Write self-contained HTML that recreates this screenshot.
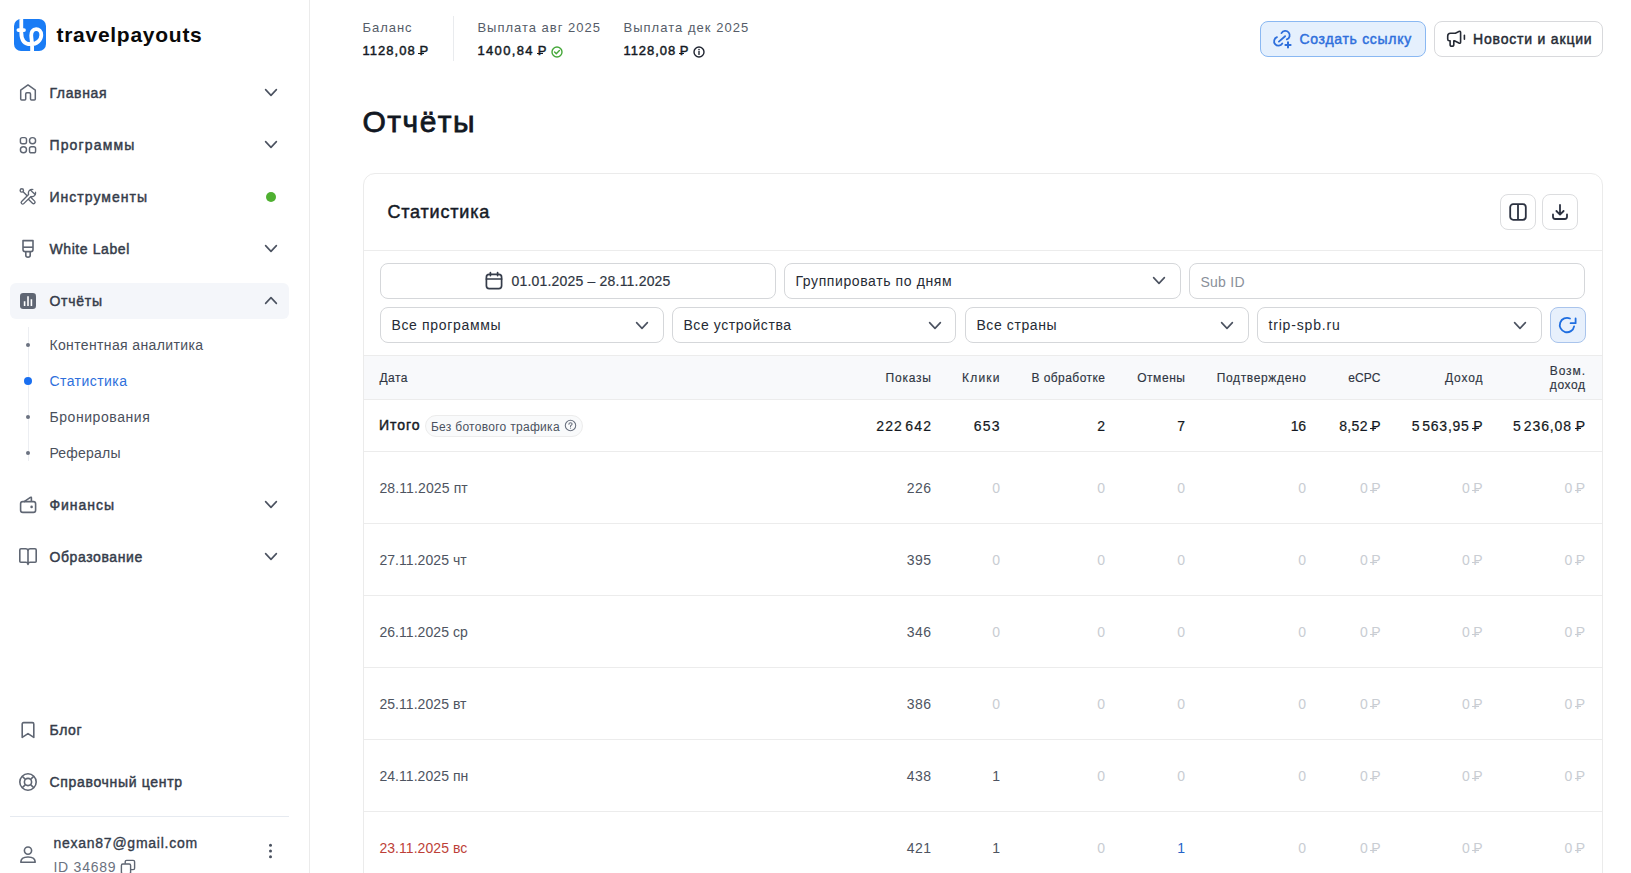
<!DOCTYPE html>
<html lang="ru">
<head>
<meta charset="utf-8">
<style>
*{box-sizing:border-box;margin:0;padding:0}
html,body{width:1631px;height:873px;overflow:hidden;background:#fff}
body{font-family:"Liberation Sans",sans-serif;color:#1f2430;position:relative}
.abs{position:absolute;white-space:nowrap}
svg{display:block}
.r{position:relative;display:inline-block}
.r::after{content:"";position:absolute;left:-0.07em;width:0.45em;top:0.665em;height:0.085em;background:currentColor}
.b .r::after{height:0.12em;left:-0.08em}
.m{-webkit-text-stroke:0.2px currentColor}
.mm{-webkit-text-stroke:0.35px currentColor}
.mh{-webkit-text-stroke:0.15px currentColor}
.sb{-webkit-text-stroke:0.45px currentColor}
</style>
</head>
<body>
<div class="abs" style="left:309px;top:0;width:1px;height:873px;background:#ebebeb"></div>
<svg class="abs" style="left:14px;top:19px" width="32" height="32" viewBox="0 0 32 32">
<defs><clipPath id="lc"><rect width="32" height="32" rx="7"/></clipPath></defs>
<rect width="32" height="32" rx="7" fill="#1a7cf5"/>
<g clip-path="url(#lc)" fill="none" stroke="#fff" stroke-width="3.8">
<path d="M4.4 11.1 H10" stroke-linecap="round"/>
<path d="M7.3 -2 V13.5 C7.3 21.5 11 25.2 16.5 25.2 C23 25.2 27.3 21 27.3 16 C27.3 12 24.8 10.2 22.2 10.2 C18.8 10.2 16.9 13 17.3 17.5 C17.6 21 18.1 24 18.1 28 V34"/>
</g></svg>
<div class="abs" style="left:56.45px;top:23.50px;font-size:21px;line-height:21px;font-weight:bold;color:#0a0a0a;letter-spacing:0.733px;">travelpayouts</div>
<div class="abs" style="left:10px;top:283px;width:279px;height:36px;border-radius:6px;background:#f4f6fa"></div>
<div class="abs b sb" style="left:49.45px;top:86.00px;font-size:14px;line-height:14px;font-weight:normal;color:#353c4a;letter-spacing:0.638px;">Главная</div>
<svg class="abs" style="left:264px;top:88px" width="14" height="9" viewBox="-1 -1 14 9"><path d="M0.6 0.6 L6.0 6.4 L11.4 0.6" fill="none" stroke="#4b5260" stroke-width="1.6" stroke-linecap="round" stroke-linejoin="round"/></svg>
<div class="abs b sb" style="left:49.45px;top:138.00px;font-size:14px;line-height:14px;font-weight:normal;color:#353c4a;letter-spacing:1.15px;">Программы</div>
<svg class="abs" style="left:264px;top:140px" width="14" height="9" viewBox="-1 -1 14 9"><path d="M0.6 0.6 L6.0 6.4 L11.4 0.6" fill="none" stroke="#4b5260" stroke-width="1.6" stroke-linecap="round" stroke-linejoin="round"/></svg>
<div class="abs b sb" style="left:49.45px;top:190.00px;font-size:14px;line-height:14px;font-weight:normal;color:#353c4a;letter-spacing:1.04px;">Инструменты</div>
<div class="abs b sb" style="left:49.45px;top:242.00px;font-size:14px;line-height:14px;font-weight:normal;color:#353c4a;letter-spacing:0.6px;">White Label</div>
<svg class="abs" style="left:264px;top:244px" width="14" height="9" viewBox="-1 -1 14 9"><path d="M0.6 0.6 L6.0 6.4 L11.4 0.6" fill="none" stroke="#4b5260" stroke-width="1.6" stroke-linecap="round" stroke-linejoin="round"/></svg>
<div class="abs b sb" style="left:49.45px;top:294.00px;font-size:14px;line-height:14px;font-weight:normal;color:#353c4a;letter-spacing:0.76px;">Отчёты</div>
<svg class="abs" style="left:264px;top:296px" width="14" height="9" viewBox="-1 -1 14 9"><path d="M0.6 6.4 L6.0 0.6 L11.4 6.4" fill="none" stroke="#4b5260" stroke-width="1.6" stroke-linecap="round" stroke-linejoin="round"/></svg>
<div class="abs b sb" style="left:49.45px;top:498.00px;font-size:14px;line-height:14px;font-weight:normal;color:#353c4a;letter-spacing:0.971px;">Финансы</div>
<svg class="abs" style="left:264px;top:500px" width="14" height="9" viewBox="-1 -1 14 9"><path d="M0.6 0.6 L6.0 6.4 L11.4 0.6" fill="none" stroke="#4b5260" stroke-width="1.6" stroke-linecap="round" stroke-linejoin="round"/></svg>
<div class="abs b sb" style="left:49.45px;top:550.00px;font-size:14px;line-height:14px;font-weight:normal;color:#353c4a;letter-spacing:0.6px;">Образование</div>
<svg class="abs" style="left:264px;top:552px" width="14" height="9" viewBox="-1 -1 14 9"><path d="M0.6 0.6 L6.0 6.4 L11.4 0.6" fill="none" stroke="#4b5260" stroke-width="1.6" stroke-linecap="round" stroke-linejoin="round"/></svg>
<div class="abs b sb" style="left:49.45px;top:723.00px;font-size:14px;line-height:14px;font-weight:normal;color:#353c4a;letter-spacing:0.664px;">Блог</div>
<div class="abs b sb" style="left:49.45px;top:775.00px;font-size:14px;line-height:14px;font-weight:normal;color:#353c4a;letter-spacing:0.681px;">Справочный центр</div>
<div class="abs" style="left:266px;top:192px;width:10px;height:10px;border-radius:5px;background:#4fb031"></div>
<svg class="abs" style="left:19px;top:83px" width="19" height="19" viewBox="0 0 19 19"><path d="M1.7 7.2 L9 1.9 L16.3 7.2 V16 Q16.3 17 15.3 17 H12.5 Q11.5 17 11.5 16 V11 Q11.5 9.8 10.3 9.8 H7.9 Q6.7 9.8 6.7 11 V16 Q6.7 17 5.7 17 H2.7 Q1.7 17 1.7 16 Z" fill="none" stroke="#5f6673" stroke-width="1.5" stroke-linejoin="round"/></svg>
<svg class="abs" style="left:19px;top:136px" width="19" height="19" viewBox="0 0 19 19"><g fill="none" stroke="#5f6673" stroke-width="1.45"><rect x="1.4" y="1.6" width="6.1" height="6.1" rx="1.9"/><circle cx="13.55" cy="4.65" r="3.05"/><circle cx="4.45" cy="13.75" r="3.05"/><rect x="10.5" y="10.7" width="6.1" height="6.1" rx="1.9"/></g></svg>
<svg class="abs" style="left:17px;top:186px" width="21" height="21" viewBox="-0.9 -0.5 24 24"><g stroke-linecap="round" fill="none"><path d="M5.2 5.2 L11.5 11.5" stroke="#5f6673" stroke-width="1.6"/><circle cx="4.6" cy="4.6" r="1.9" stroke="#5f6673" stroke-width="1.6" fill="#fff"/><path d="M13.6 13.6 L18 18" stroke="#5f6673" stroke-width="5"/><path d="M13.6 13.6 L18 18" stroke="#fff" stroke-width="1.9"/><path d="M15.5 8.5 L5.6 18.4" stroke="#5f6673" stroke-width="5"/><circle cx="16.2" cy="7.6" r="4.9" fill="#5f6673"/><path d="M15.5 8.5 L5.6 18.4" stroke="#fff" stroke-width="1.9"/><circle cx="16.2" cy="7.6" r="3.3" fill="#fff"/><path d="M17 6.8 L21 2.8" stroke="#fff" stroke-width="3.4" stroke-linecap="butt"/><path d="M14.6 4.2 L16.8 6.5 M19.6 9 L17.4 6.8" stroke="#5f6673" stroke-width="1.6"/></g></svg>
<svg class="abs" style="left:21px;top:239px" width="14" height="20" viewBox="0 0 14 20"><path d="M2 1.6 H12 V10.4 Q12 12.6 9.8 12.6 H4.2 Q2 12.6 2 10.4 Z" fill="none" stroke="#5f6673" stroke-width="1.6" stroke-linejoin="round"/><path d="M2 8.2 H12" stroke="#5f6673" stroke-width="1.6"/><path d="M4.8 12.6 V16.6 Q4.8 18.2 7 18.2 Q9.2 18.2 9.2 16.6 V12.6" fill="none" stroke="#5f6673" stroke-width="1.6"/></svg>
<svg class="abs" style="left:20px;top:293px" width="16" height="16" viewBox="0 0 16 16"><rect x="0" y="0" width="16" height="16" rx="3.2" fill="#5f6673"/><path d="M4.6 8.2 V13.1 M8 3.2 V13.1 M11.4 6.2 V13.1" stroke="#fff" stroke-width="1.6"/></svg>
<div class="abs" style="left:28px;top:327px;width:1px;height:134px;background:#eceef2"></div>
<div class="abs" style="left:26px;top:343px;width:4px;height:4px;border-radius:2px;background:#6b7280"></div>
<div class="abs" style="left:26px;top:415px;width:4px;height:4px;border-radius:2px;background:#6b7280"></div>
<div class="abs" style="left:26px;top:451px;width:4px;height:4px;border-radius:2px;background:#6b7280"></div>
<div class="abs" style="left:24px;top:377px;width:8px;height:8px;border-radius:4px;background:#1a6ff0"></div>
<div class="abs" style="left:49.45px;top:338.00px;font-size:14px;line-height:14px;font-weight:normal;color:#4a505c;letter-spacing:0.366px;">Контентная аналитика</div>
<div class="abs" style="left:49.45px;top:374.00px;font-size:14px;line-height:14px;font-weight:normal;color:#2e6fdc;letter-spacing:0.446px;">Статистика</div>
<div class="abs" style="left:49.45px;top:410.00px;font-size:14px;line-height:14px;font-weight:normal;color:#4a505c;letter-spacing:0.573px;">Бронирования</div>
<div class="abs" style="left:49.45px;top:446.00px;font-size:14px;line-height:14px;font-weight:normal;color:#4a505c;letter-spacing:0.208px;">Рефералы</div>
<svg class="abs" style="left:19px;top:495px" width="18" height="19" viewBox="0 0 18 19"><path d="M4.8 6.8 L11.4 2.4 Q12.4 1.8 12.4 3 V6.8" fill="none" stroke="#5f6673" stroke-width="1.6" stroke-linejoin="round"/><rect x="1.6" y="6.6" width="15" height="10.8" rx="2.2" fill="none" stroke="#5f6673" stroke-width="1.6"/><circle cx="12.6" cy="11.9" r="1.3" fill="#5f6673"/></svg>
<svg class="abs" style="left:18px;top:547px" width="20" height="19" viewBox="0 0 20 19"><path d="M10 4 Q10 1.8 7.6 1.8 H3 Q1.8 1.8 1.8 3 V14.2 Q1.8 15.2 2.8 15.2 H7.6 Q10 15.2 10 17.4 Q10 15.2 12.4 15.2 H17.2 Q18.2 15.2 18.2 14.2 V3 Q18.2 1.8 17 1.8 H12.4 Q10 1.8 10 4 Z M10 4 V17" fill="none" stroke="#5f6673" stroke-width="1.6" stroke-linejoin="round"/></svg>
<svg class="abs" style="left:20px;top:721px" width="16" height="18" viewBox="0 0 16 18"><path d="M2.2 16.4 V3 Q2.2 1.6 3.6 1.6 H12.4 Q13.8 1.6 13.8 3 V16.4 L8 12.6 Z" fill="none" stroke="#5f6673" stroke-width="1.6" stroke-linejoin="round"/></svg>
<svg class="abs" style="left:18px;top:772px" width="20" height="20" viewBox="0 0 20 20"><circle cx="10" cy="10" r="8.2" fill="none" stroke="#5f6673" stroke-width="1.6"/><circle cx="10" cy="10" r="3.6" fill="none" stroke="#5f6673" stroke-width="1.6"/><path d="M4.2 4.2 L7.4 7.4 M15.8 4.2 L12.6 7.4 M4.2 15.8 L7.4 12.6 M15.8 15.8 L12.6 12.6" stroke="#5f6673" stroke-width="1.6"/></svg>
<div class="abs" style="left:10px;top:816px;width:279px;height:1px;background:#e6eaf0"></div>
<svg class="abs" style="left:19px;top:845px" width="18" height="19" viewBox="0 0 18 19"><circle cx="9" cy="5.6" r="3.6" fill="none" stroke="#5f6673" stroke-width="1.6"/><path d="M1.8 17.2 Q1.8 12 9 12 Q16.2 12 16.2 17.2 Z" fill="none" stroke="#5f6673" stroke-width="1.6" stroke-linejoin="round"/></svg>
<div class="abs mm" style="left:53.45px;top:836.00px;font-size:14px;line-height:14px;font-weight:normal;color:#353c4a;letter-spacing:0.75px;">nexan87@gmail.com</div>
<div class="abs" style="left:53.45px;top:859.50px;font-size:14px;line-height:14px;font-weight:normal;color:#6b7280;letter-spacing:0.763px;">ID 34689</div>
<svg class="abs" style="left:120px;top:859px" width="16" height="16" viewBox="0 0 16 16"><path d="M5.2 4.8 V2.8 Q5.2 1.4 6.6 1.4 H13.2 Q14.6 1.4 14.6 2.8 V9.2 Q14.6 10.6 13.2 10.6 H10.8" fill="none" stroke="#5f6673" stroke-width="1.4"/><rect x="1.4" y="5" width="9.2" height="9.6" rx="1.4" fill="none" stroke="#5f6673" stroke-width="1.4"/></svg>
<svg class="abs" style="left:268px;top:843px" width="5" height="16" viewBox="0 0 5 16"><circle cx="2.5" cy="2.2" r="1.5" fill="#4b5260"/><circle cx="2.5" cy="8" r="1.5" fill="#4b5260"/><circle cx="2.5" cy="13.8" r="1.5" fill="#4b5260"/></svg>
<div class="abs" style="left:362.45px;top:21.00px;font-size:13px;line-height:13px;font-weight:normal;color:#555c68;letter-spacing:0.98px;">Баланс</div>
<div class="abs b sb" style="left:362.45px;top:44.10px;font-size:13px;line-height:13px;font-weight:normal;color:#141a24;letter-spacing:1.042px;">1128,08&#8201;<span class="r">Р</span></div>
<div class="abs" style="left:453px;top:16px;width:1px;height:45px;background:#e9ebee"></div>
<div class="abs" style="left:477.45px;top:21.00px;font-size:13px;line-height:13px;font-weight:normal;color:#555c68;letter-spacing:0.986px;">Выплата авг 2025</div>
<div class="abs b sb" style="left:477.45px;top:44.10px;font-size:13px;line-height:13px;font-weight:normal;color:#141a24;letter-spacing:1.35px;">1400,84&#8201;<span class="r">Р</span></div>
<svg class="abs" style="left:551px;top:46px" width="12" height="12" viewBox="0 0 12 12"><circle cx="6" cy="6" r="5" fill="none" stroke="#46a83a" stroke-width="1.4"/><path d="M3.6 6.1 L5.3 7.7 L8.4 4.5" fill="none" stroke="#46a83a" stroke-width="1.4" stroke-linecap="round" stroke-linejoin="round"/></svg>
<div class="abs" style="left:623.45px;top:21.00px;font-size:13px;line-height:13px;font-weight:normal;color:#555c68;letter-spacing:1.038px;">Выплата дек 2025</div>
<div class="abs b sb" style="left:623.45px;top:44.10px;font-size:13px;line-height:13px;font-weight:normal;color:#141a24;letter-spacing:0.95px;">1128,08&#8201;<span class="r">Р</span></div>
<svg class="abs" style="left:693px;top:46px" width="12" height="12" viewBox="0 0 12 12"><circle cx="6" cy="6" r="5" fill="none" stroke="#1f2430" stroke-width="1.4"/><path d="M6 5.4 V8.4" stroke="#1f2430" stroke-width="1.4" stroke-linecap="round"/><circle cx="6" cy="3.6" r="0.8" fill="#1f2430"/></svg>
<div class="abs" style="left:1260px;top:21px;width:166px;height:36px;border:1px solid #8ab8f2;border-radius:8px;background:#e5f0fd;"></div>
<svg class="abs" style="left:1270px;top:27px" width="24" height="24" viewBox="0 0 24 24"><g fill="none" stroke="#2e6fdc" stroke-width="1.8" stroke-linecap="round"><path d="M11.49 6.1 A4.4 4.4 0 1 1 16.8 12.43"/><path d="M7 10.17 A4.4 4.4 0 1 0 12.31 16.5"/><path d="M8.9 14.6 L15.1 9.2"/><path d="M18 15.3 V20.5 M15.4 17.9 H20.6" stroke-width="2"/></g></svg>
<div class="abs b sb" style="left:1299.45px;top:32.00px;font-size:14px;line-height:14px;font-weight:normal;color:#2e6fdc;letter-spacing:0.702px;">Создать ссылку</div>
<div class="abs" style="left:1434px;top:21px;width:169px;height:36px;border:1px solid #d8d9dc;border-radius:8px;background:#fff;"></div>
<svg class="abs" style="left:1444px;top:28px" width="24" height="24" viewBox="0 0 24 24"><path d="M3.7 8 Q3.7 5.2 6.5 5.2 H11.4 L14.9 3.5 Q16.6 2.8 16.6 4.6 V14 Q16.6 15.8 14.9 15 L10.4 12.7 H9.8 V16.5 Q9.8 18.3 7.95 18.3 Q6.1 18.3 6.1 16.5 V12.7 H5.3 Q3.7 12.7 3.7 11 Z" fill="none" stroke="#262b35" stroke-width="1.6" stroke-linejoin="round"/><path d="M20.4 7.4 V11.3" stroke="#262b35" stroke-width="1.6" stroke-linecap="round"/></svg>
<div class="abs b sb" style="left:1473.05px;top:32.00px;font-size:14px;line-height:14px;font-weight:normal;color:#262b35;letter-spacing:0.803px;">Новости и акции</div>
<div class="abs b sb" style="left:362.45px;top:107.00px;font-size:30px;line-height:30px;font-weight:normal;color:#111722;letter-spacing:1.5px;-webkit-text-stroke:0.77px currentColor;">Отчёты</div>
<div class="abs" style="left:363px;top:173px;width:1240px;height:760px;border:1px solid #ebebeb;border-radius:12px;background:#fff"></div>
<div class="abs b sb" style="left:387.45px;top:203.00px;font-size:18px;line-height:18px;font-weight:normal;color:#161b26;letter-spacing:0.805px;-webkit-text-stroke:0.46px currentColor;">Статистика</div>
<div class="abs" style="left:1500px;top:194px;width:36px;height:36px;border:1px solid #dcdddf;border-radius:8px;background:#fff;"></div>
<svg class="abs" style="left:1508px;top:202px" width="20" height="20" viewBox="0 0 20 20"><rect x="2.2" y="2.2" width="15.6" height="15.6" rx="3" fill="none" stroke="#2b3140" stroke-width="1.8"/><path d="M10 2.2 V17.8" stroke="#2b3140" stroke-width="1.8"/></svg>
<div class="abs" style="left:1542px;top:194px;width:36px;height:36px;border:1px solid #dcdddf;border-radius:8px;background:#fff;"></div>
<svg class="abs" style="left:1550px;top:202px" width="20" height="20" viewBox="0 0 20 20"><path d="M10 3 V12.4 M6.4 9 L10 12.6 L13.6 9" fill="none" stroke="#2b3140" stroke-width="1.8" stroke-linecap="round" stroke-linejoin="round"/><path d="M3 12.4 V14.8 Q3 17 5.2 17 H14.8 Q17 17 17 14.8 V12.4" fill="none" stroke="#2b3140" stroke-width="1.8" stroke-linecap="round"/></svg>
<div class="abs" style="left:364px;top:250px;width:1238px;height:1px;background:#ececec"></div>
<div class="abs" style="left:380px;top:263px;width:396px;height:36px;border:1px solid #d5d7da;border-radius:8px;background:#fff;"></div>
<svg class="abs" style="left:484px;top:271px" width="20" height="20" viewBox="0 0 20 20"><rect x="2.4" y="3.4" width="15.2" height="14.2" rx="2.8" fill="none" stroke="#353c4a" stroke-width="1.7"/><path d="M2.4 8 H17.6 M6.4 1.6 V4.6 M13.6 1.6 V4.6" stroke="#353c4a" stroke-width="1.7" stroke-linecap="round"/></svg>
<div class="abs m" style="left:511.45px;top:274.00px;font-size:14px;line-height:14px;font-weight:normal;color:#2f3542;letter-spacing:0.195px;">01.01.2025 – 28.11.2025</div>
<div class="abs" style="left:784px;top:263px;width:397px;height:36px;border:1px solid #d5d7da;border-radius:8px;background:#fff;"></div>
<div class="abs" style="left:795.45px;top:274.00px;font-size:14px;line-height:14px;font-weight:normal;color:#262b35;letter-spacing:0.6px;">Группировать по дням</div>
<svg class="abs" style="left:1152px;top:276px" width="14" height="9" viewBox="-1 -1 14 9"><path d="M0.6 0.6 L6.0 6.4 L11.4 0.6" fill="none" stroke="#4b5260" stroke-width="1.6" stroke-linecap="round" stroke-linejoin="round"/></svg>
<div class="abs" style="left:1189px;top:263px;width:396px;height:36px;border:1px solid #d5d7da;border-radius:8px;background:#fff;"></div>
<div class="abs" style="left:1200.45px;top:275.00px;font-size:14px;line-height:14px;font-weight:normal;color:#8a909a;letter-spacing:0.28px;">Sub ID</div>
<div class="abs" style="left:380px;top:307px;width:284px;height:36px;border:1px solid #d5d7da;border-radius:8px;background:#fff;"></div>
<div class="abs" style="left:391.45px;top:318.00px;font-size:14px;line-height:14px;font-weight:normal;color:#262b35;letter-spacing:0.665px;">Все программы</div>
<svg class="abs" style="left:635px;top:321px" width="14" height="9" viewBox="-1 -1 14 9"><path d="M0.6 0.6 L6.0 6.4 L11.4 0.6" fill="none" stroke="#4b5260" stroke-width="1.6" stroke-linecap="round" stroke-linejoin="round"/></svg>
<div class="abs" style="left:672px;top:307px;width:284px;height:36px;border:1px solid #d5d7da;border-radius:8px;background:#fff;"></div>
<div class="abs" style="left:683.45px;top:318.00px;font-size:14px;line-height:14px;font-weight:normal;color:#262b35;letter-spacing:0.576px;">Все устройства</div>
<svg class="abs" style="left:928px;top:321px" width="14" height="9" viewBox="-1 -1 14 9"><path d="M0.6 0.6 L6.0 6.4 L11.4 0.6" fill="none" stroke="#4b5260" stroke-width="1.6" stroke-linecap="round" stroke-linejoin="round"/></svg>
<div class="abs" style="left:965px;top:307px;width:284px;height:36px;border:1px solid #d5d7da;border-radius:8px;background:#fff;"></div>
<div class="abs" style="left:976.45px;top:318.00px;font-size:14px;line-height:14px;font-weight:normal;color:#262b35;letter-spacing:0.588px;">Все страны</div>
<svg class="abs" style="left:1220px;top:321px" width="14" height="9" viewBox="-1 -1 14 9"><path d="M0.6 0.6 L6.0 6.4 L11.4 0.6" fill="none" stroke="#4b5260" stroke-width="1.6" stroke-linecap="round" stroke-linejoin="round"/></svg>
<div class="abs" style="left:1257px;top:307px;width:285px;height:36px;border:1px solid #d5d7da;border-radius:8px;background:#fff;"></div>
<div class="abs" style="left:1268.45px;top:318.00px;font-size:14px;line-height:14px;font-weight:normal;color:#262b35;letter-spacing:0.84px;">trip-spb.ru</div>
<svg class="abs" style="left:1513px;top:321px" width="14" height="9" viewBox="-1 -1 14 9"><path d="M0.6 0.6 L6.0 6.4 L11.4 0.6" fill="none" stroke="#4b5260" stroke-width="1.6" stroke-linecap="round" stroke-linejoin="round"/></svg>
<div class="abs" style="left:1550px;top:307px;width:36px;height:36px;border:1px solid #a9c4ec;border-radius:8px;background:#e7f0fc;"></div>
<svg class="abs" style="left:1557px;top:315px" width="22" height="20" viewBox="0 0 22 20"><path d="M17.1 11.3 A7.2 7.2 0 1 1 13 3.5" fill="none" stroke="#1f6ee0" stroke-width="1.8" stroke-linecap="round"/><path d="M18.6 3.4 V8.2 H13.6" fill="none" stroke="#1f6ee0" stroke-width="1.8" stroke-linecap="round" stroke-linejoin="round"/></svg>
<div class="abs" style="left:364px;top:355px;width:1238px;height:45px;background:#f8f9fb;border-top:1px solid #ececec;border-bottom:1px solid #ececec"></div>
<div class="abs mh" style="left:379.45px;top:372.00px;font-size:12px;line-height:12px;font-weight:normal;color:#2f3542;letter-spacing:0.47px;">Дата</div>
<div class="abs mh" style="right:699.19px;top:372.00px;font-size:12px;line-height:12px;font-weight:normal;color:#2f3542;letter-spacing:0.81px;">Показы</div>
<div class="abs mh" style="right:630.30px;top:372.00px;font-size:12px;line-height:12px;font-weight:normal;color:#2f3542;letter-spacing:1.2px;">Клики</div>
<div class="abs mh" style="right:525.55px;top:372.00px;font-size:12px;line-height:12px;font-weight:normal;color:#2f3542;letter-spacing:0.45px;">В обработке</div>
<div class="abs mh" style="right:445.43px;top:372.00px;font-size:12px;line-height:12px;font-weight:normal;color:#2f3542;letter-spacing:0.57px;">Отмены</div>
<div class="abs mh" style="right:324.35px;top:372.00px;font-size:12px;line-height:12px;font-weight:normal;color:#2f3542;letter-spacing:0.654px;">Подтверждено</div>
<div class="abs mh" style="right:250.38px;top:372.00px;font-size:12px;line-height:12px;font-weight:normal;color:#2f3542;letter-spacing:0.117px;">eCPC</div>
<div class="abs mh" style="right:147.50px;top:372.00px;font-size:12px;line-height:12px;font-weight:normal;color:#2f3542;letter-spacing:0.9px;">Доход</div>
<div class="abs mh" style="right:45.10px;top:365.00px;font-size:12px;line-height:12px;font-weight:normal;color:#2f3542;letter-spacing:0.9px;">Возм.</div>
<div class="abs mh" style="right:45.40px;top:379.00px;font-size:12px;line-height:12px;font-weight:normal;color:#2f3542;letter-spacing:0.6px;">доход</div>
<div class="abs b sb" style="left:378.95px;top:418.00px;font-size:14px;line-height:14px;font-weight:normal;color:#161b26;letter-spacing:1.0px;">Итого</div>
<div class="abs" style="left:425px;top:415px;width:158px;height:22px;border:1px solid #ececec;border-radius:11px;background:#f9fafb"></div>
<div class="abs" style="left:430.95px;top:420.50px;font-size:12px;line-height:12px;font-weight:normal;color:#4b5260;letter-spacing:0.292px;">Без ботового трафика</div>
<svg class="abs" style="left:564px;top:419px" width="13" height="13" viewBox="0 0 13 13"><circle cx="6.5" cy="6.5" r="5.2" fill="none" stroke="#6b7280" stroke-width="1.1"/><path d="M4.9 5.2 Q4.9 3.7 6.5 3.7 Q8.1 3.7 8.1 5.1 Q8.1 6 6.9 6.5 Q6.5 6.7 6.5 7.4" fill="none" stroke="#6b7280" stroke-width="1.1" stroke-linecap="round"/><circle cx="6.5" cy="9.1" r="0.65" fill="#6b7280"/></svg>
<div class="abs m" style="right:698.85px;top:419.00px;font-size:14px;line-height:14px;font-weight:normal;color:#141922;letter-spacing:1.154px;">222&#8202;642</div>
<div class="abs m" style="right:630.35px;top:419.00px;font-size:14px;line-height:14px;font-weight:normal;color:#141922;letter-spacing:1.15px;">653</div>
<div class="abs m" style="right:525.45px;top:419.00px;font-size:14px;line-height:14px;font-weight:normal;color:#141922;letter-spacing:0.55px;">2</div>
<div class="abs m" style="right:445.45px;top:419.00px;font-size:14px;line-height:14px;font-weight:normal;color:#141922;letter-spacing:0.55px;">7</div>
<div class="abs m" style="right:325.25px;top:419.00px;font-size:14px;line-height:14px;font-weight:normal;color:#141922;letter-spacing:-0.25px;">16</div>
<div class="abs m" style="right:250.11px;top:419.00px;font-size:14px;line-height:14px;font-weight:normal;color:#141922;letter-spacing:0.39px;">8,52&#8201;<span class="r">Р</span></div>
<div class="abs m" style="right:147.63px;top:419.00px;font-size:14px;line-height:14px;font-weight:normal;color:#141922;letter-spacing:0.772px;">5&#8202;563,95&#8201;<span class="r">Р</span></div>
<div class="abs m" style="right:45.12px;top:419.00px;font-size:14px;line-height:14px;font-weight:normal;color:#141922;letter-spacing:0.884px;">5&#8202;236,08&#8201;<span class="r">Р</span></div>
<div class="abs" style="left:364px;top:451px;width:1238px;height:1px;background:#ececec"></div>
<div class="abs" style="left:379.45px;top:481.00px;font-size:14px;line-height:14px;font-weight:normal;color:#4e5461;letter-spacing:0.118px;">28.11.2025 пт</div>
<div class="abs" style="right:699.50px;top:481.00px;font-size:14px;line-height:14px;font-weight:normal;color:#4e5461;letter-spacing:0.5px;">226</div>
<div class="abs" style="right:630.50px;top:481.00px;font-size:14px;line-height:14px;font-weight:normal;color:#c9cdd3;letter-spacing:0.5px;">0</div>
<div class="abs" style="right:525.50px;top:481.00px;font-size:14px;line-height:14px;font-weight:normal;color:#c9cdd3;letter-spacing:0.5px;">0</div>
<div class="abs" style="right:445.50px;top:481.00px;font-size:14px;line-height:14px;font-weight:normal;color:#c9cdd3;letter-spacing:0.5px;">0</div>
<div class="abs" style="right:324.50px;top:481.00px;font-size:14px;line-height:14px;font-weight:normal;color:#c9cdd3;letter-spacing:0.5px;">0</div>
<div class="abs" style="right:250.20px;top:481.00px;font-size:14px;line-height:14px;font-weight:normal;color:#c9cdd3;letter-spacing:0.3px;">0&#8201;<span class="r">Р</span></div>
<div class="abs" style="right:148.10px;top:481.00px;font-size:14px;line-height:14px;font-weight:normal;color:#c9cdd3;letter-spacing:0.3px;">0&#8201;<span class="r">Р</span></div>
<div class="abs" style="right:45.70px;top:481.00px;font-size:14px;line-height:14px;font-weight:normal;color:#c9cdd3;letter-spacing:0.3px;">0&#8201;<span class="r">Р</span></div>
<div class="abs" style="left:364px;top:523px;width:1238px;height:1px;background:#ececec"></div>
<div class="abs" style="left:379.45px;top:553.00px;font-size:14px;line-height:14px;font-weight:normal;color:#4e5461;letter-spacing:0.05px;">27.11.2025 чт</div>
<div class="abs" style="right:699.50px;top:553.00px;font-size:14px;line-height:14px;font-weight:normal;color:#4e5461;letter-spacing:0.5px;">395</div>
<div class="abs" style="right:630.50px;top:553.00px;font-size:14px;line-height:14px;font-weight:normal;color:#c9cdd3;letter-spacing:0.5px;">0</div>
<div class="abs" style="right:525.50px;top:553.00px;font-size:14px;line-height:14px;font-weight:normal;color:#c9cdd3;letter-spacing:0.5px;">0</div>
<div class="abs" style="right:445.50px;top:553.00px;font-size:14px;line-height:14px;font-weight:normal;color:#c9cdd3;letter-spacing:0.5px;">0</div>
<div class="abs" style="right:324.50px;top:553.00px;font-size:14px;line-height:14px;font-weight:normal;color:#c9cdd3;letter-spacing:0.5px;">0</div>
<div class="abs" style="right:250.20px;top:553.00px;font-size:14px;line-height:14px;font-weight:normal;color:#c9cdd3;letter-spacing:0.3px;">0&#8201;<span class="r">Р</span></div>
<div class="abs" style="right:148.10px;top:553.00px;font-size:14px;line-height:14px;font-weight:normal;color:#c9cdd3;letter-spacing:0.3px;">0&#8201;<span class="r">Р</span></div>
<div class="abs" style="right:45.70px;top:553.00px;font-size:14px;line-height:14px;font-weight:normal;color:#c9cdd3;letter-spacing:0.3px;">0&#8201;<span class="r">Р</span></div>
<div class="abs" style="left:364px;top:595px;width:1238px;height:1px;background:#ececec"></div>
<div class="abs" style="left:379.45px;top:625.00px;font-size:14px;line-height:14px;font-weight:normal;color:#4e5461;letter-spacing:0.05px;">26.11.2025 ср</div>
<div class="abs" style="right:699.50px;top:625.00px;font-size:14px;line-height:14px;font-weight:normal;color:#4e5461;letter-spacing:0.5px;">346</div>
<div class="abs" style="right:630.50px;top:625.00px;font-size:14px;line-height:14px;font-weight:normal;color:#c9cdd3;letter-spacing:0.5px;">0</div>
<div class="abs" style="right:525.50px;top:625.00px;font-size:14px;line-height:14px;font-weight:normal;color:#c9cdd3;letter-spacing:0.5px;">0</div>
<div class="abs" style="right:445.50px;top:625.00px;font-size:14px;line-height:14px;font-weight:normal;color:#c9cdd3;letter-spacing:0.5px;">0</div>
<div class="abs" style="right:324.50px;top:625.00px;font-size:14px;line-height:14px;font-weight:normal;color:#c9cdd3;letter-spacing:0.5px;">0</div>
<div class="abs" style="right:250.20px;top:625.00px;font-size:14px;line-height:14px;font-weight:normal;color:#c9cdd3;letter-spacing:0.3px;">0&#8201;<span class="r">Р</span></div>
<div class="abs" style="right:148.10px;top:625.00px;font-size:14px;line-height:14px;font-weight:normal;color:#c9cdd3;letter-spacing:0.3px;">0&#8201;<span class="r">Р</span></div>
<div class="abs" style="right:45.70px;top:625.00px;font-size:14px;line-height:14px;font-weight:normal;color:#c9cdd3;letter-spacing:0.3px;">0&#8201;<span class="r">Р</span></div>
<div class="abs" style="left:364px;top:667px;width:1238px;height:1px;background:#ececec"></div>
<div class="abs" style="left:379.45px;top:697.00px;font-size:14px;line-height:14px;font-weight:normal;color:#4e5461;letter-spacing:0.05px;">25.11.2025 вт</div>
<div class="abs" style="right:699.50px;top:697.00px;font-size:14px;line-height:14px;font-weight:normal;color:#4e5461;letter-spacing:0.5px;">386</div>
<div class="abs" style="right:630.50px;top:697.00px;font-size:14px;line-height:14px;font-weight:normal;color:#c9cdd3;letter-spacing:0.5px;">0</div>
<div class="abs" style="right:525.50px;top:697.00px;font-size:14px;line-height:14px;font-weight:normal;color:#c9cdd3;letter-spacing:0.5px;">0</div>
<div class="abs" style="right:445.50px;top:697.00px;font-size:14px;line-height:14px;font-weight:normal;color:#c9cdd3;letter-spacing:0.5px;">0</div>
<div class="abs" style="right:324.50px;top:697.00px;font-size:14px;line-height:14px;font-weight:normal;color:#c9cdd3;letter-spacing:0.5px;">0</div>
<div class="abs" style="right:250.20px;top:697.00px;font-size:14px;line-height:14px;font-weight:normal;color:#c9cdd3;letter-spacing:0.3px;">0&#8201;<span class="r">Р</span></div>
<div class="abs" style="right:148.10px;top:697.00px;font-size:14px;line-height:14px;font-weight:normal;color:#c9cdd3;letter-spacing:0.3px;">0&#8201;<span class="r">Р</span></div>
<div class="abs" style="right:45.70px;top:697.00px;font-size:14px;line-height:14px;font-weight:normal;color:#c9cdd3;letter-spacing:0.3px;">0&#8201;<span class="r">Р</span></div>
<div class="abs" style="left:364px;top:739px;width:1238px;height:1px;background:#ececec"></div>
<div class="abs" style="left:379.45px;top:769.00px;font-size:14px;line-height:14px;font-weight:normal;color:#4e5461;letter-spacing:0.05px;">24.11.2025 пн</div>
<div class="abs" style="right:699.50px;top:769.00px;font-size:14px;line-height:14px;font-weight:normal;color:#4e5461;letter-spacing:0.5px;">438</div>
<div class="abs" style="right:630.50px;top:769.00px;font-size:14px;line-height:14px;font-weight:normal;color:#4e5461;letter-spacing:0.5px;">1</div>
<div class="abs" style="right:525.50px;top:769.00px;font-size:14px;line-height:14px;font-weight:normal;color:#c9cdd3;letter-spacing:0.5px;">0</div>
<div class="abs" style="right:445.50px;top:769.00px;font-size:14px;line-height:14px;font-weight:normal;color:#c9cdd3;letter-spacing:0.5px;">0</div>
<div class="abs" style="right:324.50px;top:769.00px;font-size:14px;line-height:14px;font-weight:normal;color:#c9cdd3;letter-spacing:0.5px;">0</div>
<div class="abs" style="right:250.20px;top:769.00px;font-size:14px;line-height:14px;font-weight:normal;color:#c9cdd3;letter-spacing:0.3px;">0&#8201;<span class="r">Р</span></div>
<div class="abs" style="right:148.10px;top:769.00px;font-size:14px;line-height:14px;font-weight:normal;color:#c9cdd3;letter-spacing:0.3px;">0&#8201;<span class="r">Р</span></div>
<div class="abs" style="right:45.70px;top:769.00px;font-size:14px;line-height:14px;font-weight:normal;color:#c9cdd3;letter-spacing:0.3px;">0&#8201;<span class="r">Р</span></div>
<div class="abs" style="left:364px;top:811px;width:1238px;height:1px;background:#ececec"></div>
<div class="abs" style="left:379.45px;top:841.00px;font-size:14px;line-height:14px;font-weight:normal;color:#bd3f38;letter-spacing:0.05px;">23.11.2025 вс</div>
<div class="abs" style="right:699.50px;top:841.00px;font-size:14px;line-height:14px;font-weight:normal;color:#4e5461;letter-spacing:0.5px;">421</div>
<div class="abs" style="right:630.50px;top:841.00px;font-size:14px;line-height:14px;font-weight:normal;color:#4e5461;letter-spacing:0.5px;">1</div>
<div class="abs" style="right:525.50px;top:841.00px;font-size:14px;line-height:14px;font-weight:normal;color:#c9cdd3;letter-spacing:0.5px;">0</div>
<div class="abs" style="right:445.50px;top:841.00px;font-size:14px;line-height:14px;font-weight:normal;color:#2563c9;letter-spacing:0.5px;">1</div>
<div class="abs" style="right:324.50px;top:841.00px;font-size:14px;line-height:14px;font-weight:normal;color:#c9cdd3;letter-spacing:0.5px;">0</div>
<div class="abs" style="right:250.20px;top:841.00px;font-size:14px;line-height:14px;font-weight:normal;color:#c9cdd3;letter-spacing:0.3px;">0&#8201;<span class="r">Р</span></div>
<div class="abs" style="right:148.10px;top:841.00px;font-size:14px;line-height:14px;font-weight:normal;color:#c9cdd3;letter-spacing:0.3px;">0&#8201;<span class="r">Р</span></div>
<div class="abs" style="right:45.70px;top:841.00px;font-size:14px;line-height:14px;font-weight:normal;color:#c9cdd3;letter-spacing:0.3px;">0&#8201;<span class="r">Р</span></div>
<div class="abs" style="left:364px;top:883px;width:1238px;height:1px;background:#ececec"></div>
</body>
</html>
